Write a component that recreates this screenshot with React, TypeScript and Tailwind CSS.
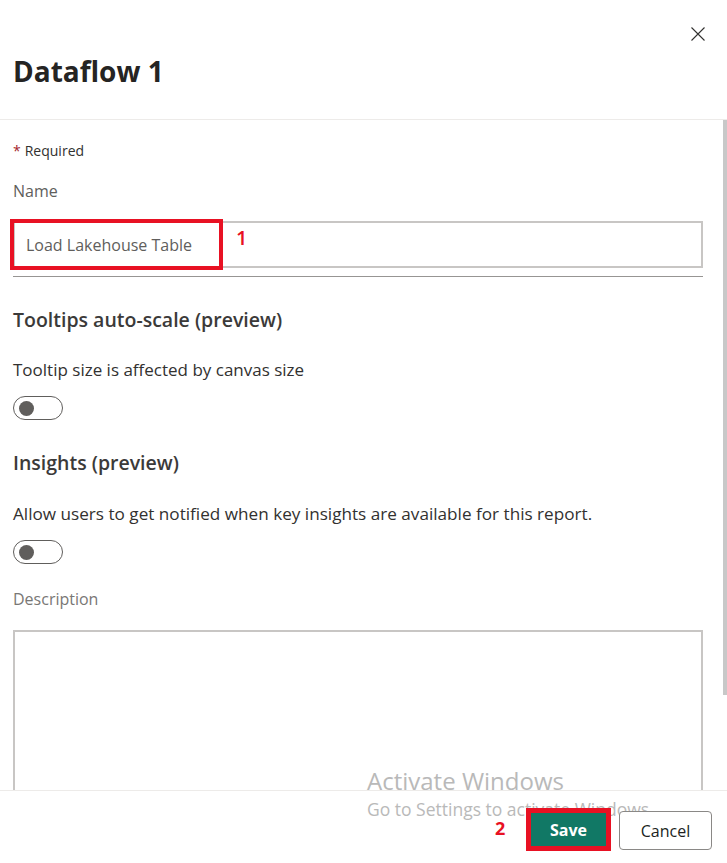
function Toggle() {
  return (
    <div className="w-[50px] h-[24px] rounded-full border border-[#605e5c] flex items-center pl-[5px] bg-white">
      <div className="w-[15px] h-[15px] rounded-full bg-[#605e5c]" />
    </div>
  );
}

export default function App() {
  return (
    <div className="relative w-full h-[863px] overflow-hidden bg-white flex flex-col font-['Open_Sans',sans-serif] text-[#323130]">
      {/* Header */}
      <div className="h-[120px] shrink-0 border-b border-[#edebe9] flex justify-between items-start pl-[13px]">
        <h1 className="mt-[51px] h-[40px] leading-[40px] text-[28px] font-bold text-[#252423]">Dataflow 1</h1>
        <button className="mt-[27px] mr-[22px] w-[14px] h-[14px] flex items-center justify-center" aria-label="Close">
          <svg width="14" height="14" viewBox="0 0 14 14" fill="none" stroke="#323130" strokeWidth="1.1">
            <path d="M0.5 0.5 L13.5 13.5 M13.5 0.5 L0.5 13.5" />
          </svg>
        </button>
      </div>

      {/* Body */}
      <div className="flex-1 min-h-0 flex">
        <div className="flex-1 min-w-0 pl-[13px] pr-[20px] overflow-hidden flex flex-col">
          <div className="mt-[21px] h-[20px] leading-[20px] text-[14px] text-[#323130]">
            <span className="text-[#a4262c] mr-[4px]">*</span>Required
          </div>
          <div className="mt-[19px] h-[22px] leading-[22px] text-[16px] text-[#605e5c]">Name</div>

          <div className="relative mt-[19px]">
            <input
              readOnly
              defaultValue="Load Lakehouse Table"
              className="w-full h-[47px] border-2 border-[#c8c6c4] px-[11px] text-[16px] text-[#605e5c] outline-none bg-white"
            />
            <div className="absolute left-[-3px] top-[-2px] w-[213px] h-[51px] border-[4px] border-[#e81123] pointer-events-none" />
            <div className="absolute left-[223px] top-[7px] text-[20px] leading-[20px] font-semibold text-[#e81123]">1</div>
          </div>
          <div className="mt-[8px] h-[1px] shrink-0 bg-[#979593]" />

          <div className="mt-[31px] h-[24px] leading-[24px] text-[19.5px] font-semibold text-[#3b3a39]">Tooltips auto-scale (preview)</div>
          <div className="mt-[26px] h-[24px] leading-[24px] text-[17px] text-[#323130]">Tooltip size is affected by canvas size</div>
          <div className="mt-[14px]">
            <Toggle />
          </div>

          <div className="mt-[31px] h-[24px] leading-[24px] text-[19.5px] font-semibold text-[#3b3a39]">Insights (preview)</div>
          <div className="mt-[27px] h-[24px] leading-[24px] text-[17.15px] text-[#323130]">
            Allow users to get notified when key insights are available for this report.
          </div>
          <div className="mt-[14px]">
            <Toggle />
          </div>

          <div className="mt-[24px] h-[22px] leading-[22px] text-[16px] text-[#797775]">Description</div>
          <textarea
            readOnly
            className="mt-[20px] w-full h-[220px] shrink-0 border-2 border-[#c8c6c4] resize-none outline-none bg-white"
          />
        </div>
        <div className="w-[4px] shrink-0">
          <div className="h-[575px] bg-[#c8c8c8]" />
        </div>
      </div>

      {/* Footer */}
      <div className="h-[73px] shrink-0 border-t border-[#edebe9] flex justify-end items-start pt-[17px] pr-[15px] gap-[8px]">
        <div className="relative z-10">
          <div className="absolute left-[-31px] top-[13px] text-[18px] leading-[14px] font-bold text-[#e81123]">2</div>
          <button className="w-[85px] h-[43px] border-[5px] border-[#e81123] bg-[#117865] text-white text-[16px] font-bold flex items-center justify-center">
            Save
          </button>
        </div>
        <button className="relative z-10 mt-[3px] w-[93px] h-[39px] rounded-[4px] border border-[#8a8886] bg-white text-[16px] text-[#201f1e] flex items-center justify-center">
          Cancel
        </button>
      </div>

      {/* Activate Windows watermark */}
      <div className="absolute left-[367px] top-[769px] pointer-events-none text-[#b9b9b9]">
        <div className="text-[24px] leading-[24px]">Activate Windows</div>
        <div className="mt-[9px] text-[17.5px] leading-[14px]">Go to Settings to activate Windows.</div>
      </div>
    </div>
  );
}
